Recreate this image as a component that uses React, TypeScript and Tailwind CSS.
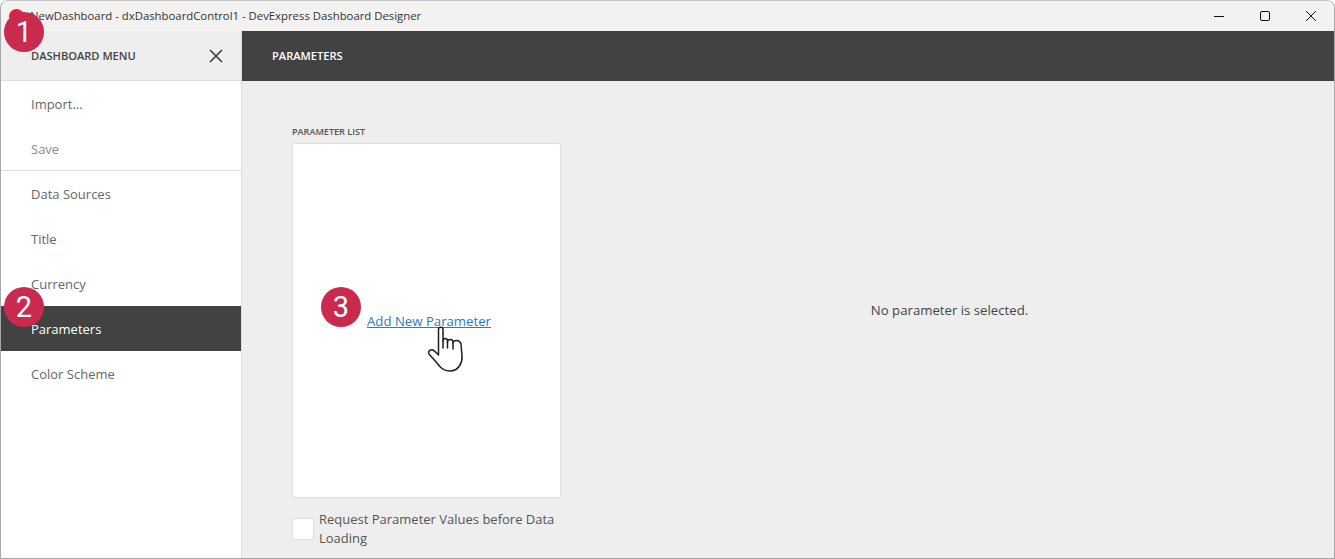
import React from 'react';

const FONT = "font-['Open_Sans','Noto_Sans',sans-serif]";

function Badge({ n, className }: { n: number; className: string }) {
  return (
    <div className={`absolute w-10 h-10 rounded-full bg-[#c92a4e] text-white flex items-center justify-center text-[29px] leading-none font-['Roboto',sans-serif] ${className}`}>
      {n}
    </div>
  );
}

function MenuItem({ label, muted, active }: { label: string; muted?: boolean; active?: boolean }) {
  const color = active ? 'bg-[#424242] text-white' : muted ? 'text-[#8c8c8c]' : 'text-[#666666]';
  return <div className={`h-[45px] shrink-0 flex items-center pl-[30px] pt-[2px] text-[13px] ${color}`}>{label}</div>;
}

function HandCursor() {
  return (
    <svg className="absolute left-[426px] top-[324px]" width="40" height="50" viewBox="0 0 40 50" fill="#ffffff" stroke="#1d1d25" strokeWidth="1.5" strokeLinejoin="round" strokeLinecap="round">
      <path d="M12.500 31V5C12.500 2.500 17 2.500 17 5V17C17 13.500 21.500 13.500 21.500 17V18C21.500 14.500 27 14.500 27 18V19C27 15.500 34 15.500 35 20L36 32C36.500 38 33 47 24 47C17 47 14 43 11 39L3 30C1.500 28 4 25 7 26C9 27 11 29.500 12.500 31Z" />
      <path d="M17 17V24M21.500 18V24M27 19V25" fill="none" />
    </svg>
  );
}

export default function App() {
  return (
    <div className={`relative w-[1335px] h-[559px] overflow-hidden flex flex-col bg-white ${FONT}`}>
      <div className="flex-1 flex flex-col min-h-0 border border-[#a8a8a8] border-t-[#c4c4c4] rounded-t-[8px] overflow-hidden">
        <div className="h-[30px] shrink-0 bg-[#f3f2f0] flex items-center text-[11.35px] text-[#333333]">
          <div className="w-[15px] h-[15px] rounded-full bg-[#e3213a] ml-2 mr-[6px] shrink-0" />
          <span>NewDashboard - dxDashboardControl1 - DevExpress Dashboard Designer</span>
          <div className="ml-auto flex items-center text-[#111111]">
            <div className="w-[46px] h-[30px] flex items-center justify-center">
              <svg width="12" height="12" viewBox="0 0 12 12" fill="none" stroke="currentColor" strokeWidth="1"><path d="M1 6.500h10" /></svg>
            </div>
            <div className="w-[46px] h-[30px] flex items-center justify-center">
              <svg width="12" height="12" viewBox="0 0 12 12" fill="none" stroke="currentColor" strokeWidth="1"><rect x="1.500" y="1.500" width="9" height="9" rx="1.500" /></svg>
            </div>
            <div className="w-[46px] h-[30px] flex items-center justify-center">
              <svg width="12" height="12" viewBox="0 0 12 12" fill="none" stroke="currentColor" strokeWidth="1"><path d="M1 1l10 10M11 1L1 11" /></svg>
            </div>
          </div>
        </div>
        <div className="flex-1 flex min-h-0">
          <aside className="w-[240px] shrink-0 bg-white flex flex-col">
            <div className="h-[50px] shrink-0 bg-[#eeeeee] border-b border-[#dddddd] flex items-center justify-between pl-[30px] pr-[18px] pt-[1px]">
              <span className="text-[11.1px] font-semibold text-[#444444]">DASHBOARD MENU</span>
              <svg width="14" height="14" viewBox="0 0 14 14" fill="none" stroke="#3f3f3f" strokeWidth="1.700"><path d="M1 1l12 12M13 1L1 13" /></svg>
            </div>
            <div className="h-[90px] shrink-0 border-b border-[#dddddd]">
              <MenuItem label="Import..." />
              <MenuItem label="Save" muted />
            </div>
            <MenuItem label="Data Sources" />
            <MenuItem label="Title" />
            <MenuItem label="Currency" />
            <MenuItem label="Parameters" active />
            <MenuItem label="Color Scheme" />
          </aside>
          <main className="flex-1 min-w-0 flex flex-col bg-[#eeeeee] border-l border-[#dddddd]">
            <div className="h-[50px] shrink-0 bg-[#424242] flex items-center pl-[30px] pt-[1px] text-[11.1px] font-semibold text-white">PARAMETERS</div>
            <div className="flex-1 min-h-0 flex pl-[50px]">
              <div className="w-[269px] shrink-0 flex flex-col pt-[45px]">
                <div className="h-[17px] text-[9.1px] leading-[12px] font-semibold text-[#555555]">PARAMETER LIST</div>
                <div className="h-[355px] bg-white border border-[#dddddd] rounded-[2px] flex items-center justify-center pt-[3px] pl-[5px]">
                  <span className="text-[13.2px] text-[#2a7cc0] underline">Add New Parameter</span>
                </div>
                <div className="flex items-center gap-[5px] mt-[12px]">
                  <div className="w-[22px] h-[22px] bg-white border border-[#dddddd] rounded-[2px] shrink-0" />
                  <div className="text-[13px] leading-[19px] text-[#555555]">Request Parameter Values before Data Loading</div>
                </div>
              </div>
              <div className="flex-1 flex items-center justify-center pb-[18px] pl-[4px] text-[13.2px] text-[#444444]">No parameter is selected.</div>
            </div>
          </main>
        </div>
      </div>
      <Badge n={1} className="left-1 top-3" />
      <Badge n={2} className="left-1 top-[287px]" />
      <Badge n={3} className="left-[321px] top-[287px]" />
      <HandCursor />
    </div>
  );
}
